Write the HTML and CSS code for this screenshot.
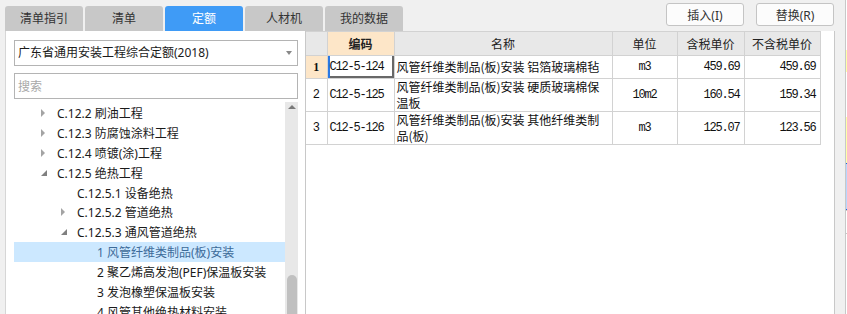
FILE: index.html
```
<!DOCTYPE html>
<html lang="zh-CN">
<head>
    <meta charset="UTF-8">
    <meta name="viewport" content="width=device-width, initial-scale=1.0">
    <title>定额库</title>
    <link rel="stylesheet" href="styles.css">
</head>
<body>
    <div class="app">
        <div class="content">
            <div class="topbar">
                <div class="tabs">
                    <div class="tab">清单指引</div>
                    <div class="tab">清单</div>
                    <div class="tab active">定额</div>
                    <div class="tab">人材机</div>
                    <div class="tab">我的数据</div>
                </div>
                <div class="actions">
                    <button class="btn">插入(I)</button>
                    <button class="btn">替换(R)</button>
                </div>
            </div>

            <div class="main">
                <div class="left-panel">
                    <div class="select">
                        <span>广东省通用安装工程综合定额(2018)</span>
                        <span class="caret"></span>
                    </div>
                    <input class="search" type="text" placeholder="搜索">

                    <div class="tree-wrap">
                        <div class="tree">
                            <div class="node lv1"><span class="arrow closed"></span>C.12.2 刷油工程</div>
                            <div class="node lv1"><span class="arrow closed"></span>C.12.3 防腐蚀涂料工程</div>
                            <div class="node lv1"><span class="arrow closed"></span>C.12.4 喷镀(涂)工程</div>
                            <div class="node lv1"><span class="arrow open"></span>C.12.5 绝热工程</div>
                            <div class="node lv2"><span class="arrow"></span>C.12.5.1 设备绝热</div>
                            <div class="node lv2"><span class="arrow closed"></span>C.12.5.2 管道绝热</div>
                            <div class="node lv2"><span class="arrow open"></span>C.12.5.3 通风管道绝热</div>
                            <div class="node lv3 selected"><span class="arrow"></span>1 风管纤维类制品(板)安装</div>
                            <div class="node lv3"><span class="arrow"></span>2 聚乙烯高发泡(PEF)保温板安装</div>
                            <div class="node lv3"><span class="arrow"></span>3 发泡橡塑保温板安装</div>
                            <div class="node lv3"><span class="arrow"></span>4 风管其他绝热材料安装</div>
                        </div>
                        <div class="vscroll">
                            <span class="up"></span>
                            <span class="thumb"></span>
                        </div>
                    </div>
                </div>

                <div class="grid-panel">
                    <table class="grid">
                        <colgroup>
                            <col class="c-no">
                            <col class="c-code">
                            <col class="c-name">
                            <col class="c-unit">
                            <col class="c-price">
                            <col class="c-price2">
                        </colgroup>
                        <thead>
                            <tr>
                                <th></th>
                                <th class="current">编码</th>
                                <th>名称</th>
                                <th>单位</th>
                                <th>含税单价</th>
                                <th>不含税单价</th>
                            </tr>
                        </thead>
                        <tbody>
                            <tr class="row-single">
                                <td class="no current">1</td>
                                <td class="code focus">C12-5-124</td>
                                <td class="name">风管纤维类制品(板)安装 铝箔玻璃棉毡</td>
                                <td class="unit">m3</td>
                                <td class="num">459.69</td>
                                <td class="num">459.69</td>
                            </tr>
                            <tr class="row-double">
                                <td class="no">2</td>
                                <td class="code">C12-5-125</td>
                                <td class="name">风管纤维类制品(板)安装 硬质玻璃棉保<br>温板</td>
                                <td class="unit">10m2</td>
                                <td class="num">160.54</td>
                                <td class="num">159.34</td>
                            </tr>
                            <tr class="row-double">
                                <td class="no">3</td>
                                <td class="code">C12-5-126</td>
                                <td class="name">风管纤维类制品(板)安装 其他纤维类制<br>品(板)</td>
                                <td class="unit">m3</td>
                                <td class="num">125.07</td>
                                <td class="num">123.56</td>
                            </tr>
                        </tbody>
                    </table>
                </div>
            </div>
        </div>

        <div class="side-strip">
            <div class="seg white" style="height: 50px"></div>
            <div class="seg yellow" style="height: 22px"></div>
            <div class="seg white" style="height: 45px"></div>
            <div class="seg yellow" style="height: 46px"></div>
            <div class="seg blue" style="height: 47px"></div>
            <div class="seg white line" style="height: 23px"></div>
            <div class="seg white line" style="height: 24px"></div>
            <div class="seg white" style="height: 57px"></div>
        </div>
    </div>
</body>
</html>
```

FILE: styles.css
```
body {
    margin: 0;
    background-color: #f0f0f0;
    font-family: "Noto Sans", "Noto Sans CJK SC", sans-serif;
    font-size: 12px;
    color: #1a1a1a;
    overflow: hidden;
}
.app {
    display: flex;
    width: 847px;
    height: 314px;
}
.content {
    width: 845px;
}

/* top bar: tabs + buttons */
.topbar {
    display: flex;
    height: 31px;
    padding-left: 5px;
    padding-right: 11px;
}
.tabs {
    display: flex;
    gap: 2px;
    align-self: flex-end;
}
.tab {
    width: 78px;
    height: 25px;
    line-height: 25px;
    text-align: center;
    background-color: #c8c8c8;
    border-radius: 3px 3px 0 0;
    color: #333;
}
.tab.active {
    background-color: #3f9bf6;
    color: #fff;
}
.actions {
    display: flex;
    gap: 12px;
    margin-left: auto;
    margin-top: 3px;
    align-self: flex-start;
}
.btn {
    width: 78px;
    height: 23px;
    padding: 0;
    border: 1px solid #c4c4c4;
    border-radius: 3px;
    background-color: #fcfcfc;
    font-family: inherit;
    font-size: 12px;
    color: #333;
}

/* main area */
.main {
    display: flex;
    height: 283px;
}
.left-panel {
    box-sizing: border-box;
    width: 300px;
    margin-left: 5px;
    padding: 9px 7px 0 8px;
    background-color: #fff;
    border-left: 1px solid #d6d6d6;
}
.select {
    position: relative;
    box-sizing: border-box;
    height: 26px;
    line-height: 24px;
    padding-left: 3px;
    border: 1px solid #b4b4b4;
}
.caret {
    position: absolute;
    right: 5px;
    top: 10px;
    border-top: 4px solid #888;
    border-left: 3px solid transparent;
    border-right: 3px solid transparent;
}
.search {
    display: block;
    box-sizing: border-box;
    width: 100%;
    height: 26px;
    margin: 7px 0 0;
    padding: 0 3px;
    border: 1px solid #b4b4b4;
    font-family: inherit;
    font-size: 12px;
    outline: none;
}
.search::placeholder {
    color: #a8a8a8;
}
.tree-wrap {
    display: flex;
    height: 212px;
    margin-top: 3px;
}
.tree {
    flex: 1;
    padding-top: 1px;
}
.node {
    display: flex;
    align-items: center;
    height: 19.9px;
    white-space: nowrap;
}
.node.lv1 {
    padding-left: 27px;
}
.node.lv2 {
    padding-left: 47px;
}
.node.lv3 {
    padding-left: 67px;
}
.node.selected {
    background-color: #cce8ff;
    color: #3d6b99;
}
.arrow {
    width: 16px;
    flex-shrink: 0;
}
.arrow.closed::before {
    content: "";
    display: block;
    width: 0;
    border-left: 4px solid #a4a4a4;
    border-top: 4px solid transparent;
    border-bottom: 4px solid transparent;
}
.arrow.open::before {
    content: "";
    display: block;
    width: 0;
    border-bottom: 6px solid #808080;
    border-left: 6px solid transparent;
}
.vscroll {
    position: relative;
    width: 13px;
    background-color: #e8e8e8;
}
.vscroll .up {
    position: absolute;
    left: 3px;
    top: 3px;
    border-bottom: 4px solid #7a7a7a;
    border-left: 4px solid transparent;
    border-right: 4px solid transparent;
}
.vscroll .thumb {
    position: absolute;
    left: 2px;
    right: 1px;
    top: 173px;
    bottom: 0;
    background-color: #c0c0c0;
    border-radius: 5px 5px 0 0;
}

/* grid */
.grid-panel {
    box-sizing: border-box;
    width: 530px;
    background-color: #fff;
    border-left: 1px solid #c8c8c8;
    border-right: 1px solid #c8c8c8;
}
.grid {
    border-collapse: collapse;
    table-layout: fixed;
    width: 514px;
}
.c-no { width: 21px; }
.c-code { width: 67px; }
.c-name { width: 218px; }
.c-unit { width: 65px; }
.c-price { width: 67px; }
.c-price2 { width: 76px; }
.grid th,
.grid td {
    border: 1px solid #d2d2d2;
    padding: 0;
    overflow: hidden;
    white-space: nowrap;
}
.grid th:first-child,
.grid td:first-child {
    border-left: none;
}
.grid thead tr {
    height: 24px;
}
.grid th {
    background-color: #e8e8e8;
    font-weight: normal;
    color: #222;
}
.grid th.current {
    background-color: #fde6c8;
    font-weight: bold;
}
.row-single {
    height: 23px;
}
.row-double {
    height: 33px;
}
.grid td {
    color: #111;
}
.grid td.no {
    text-align: center;
    font-family: "Liberation Mono", monospace;
    font-size: 12px;
}
.grid td.no.current {
    background-color: #fde6c8;
    font-family: "Liberation Serif", serif;
    font-weight: bold;
}
.grid td.code,
.grid td.unit,
.grid td.num {
    font-family: "Liberation Mono", monospace;
    font-size: 12px;
    letter-spacing: -1.2px;
}
.grid td.code {
    padding-left: 2px;
}
.grid td.focus {
    box-shadow: inset 2px 0 #2a78e4, inset -2px -2px #686868;
}
.grid td.name {
    padding-left: 2px;
    line-height: 16px;
    font-family: "Noto Sans CJK SC", sans-serif;
}
.grid td.unit {
    text-align: center;
}
.grid td.num {
    text-align: right;
    padding-right: 4px;
}

/* cut-off panel at the right edge */
.side-strip {
    box-sizing: border-box;
    width: 2px;
    border-left: 1px solid #c8c8c8;
}
.seg.white {
    background-color: #fff;
}
.seg.yellow {
    background-color: #ffffa8;
}
.seg.blue {
    background-color: #b8d6ff;
    border-top: 1px solid #1a66e0;
    border-bottom: 1px solid #1a66e0;
    box-sizing: border-box;
}
.seg.line {
    border-top: 1px solid #c8c8c8;
    box-sizing: border-box;
}
```
